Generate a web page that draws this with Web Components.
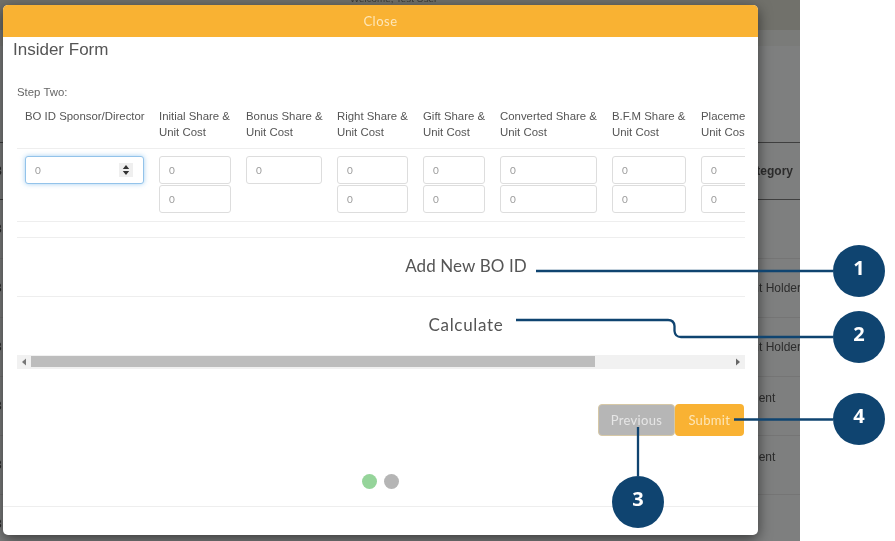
<!DOCTYPE html>
<html>
<head>
<meta charset="utf-8">
<title>Insider Form</title>
<style>
  html, body { margin: 0; padding: 0; width: 895px; height: 541px; overflow: hidden; background: #fff; }
  body { filter: blur(.35px); }
</style>
</head>
<body>
<page-backdrop>
  <insider-modal>
    <share-table></share-table>
  </insider-modal>
</page-backdrop>
<call-outs></call-outs>

<script>
const backdropContent = `
  <style>
    :host { display: block; position: relative; width: 800px; height: 541px; overflow: hidden; background: #7e7f7f; font: 12px 'Liberation Sans', Arial, sans-serif; color: #2c2c2c; }
    .top { height: 30px; background: #71716b; overflow: hidden; }
    .welcome { display: block; margin: -8px 0 0 350px; font-size: 9.800px; line-height: 14px; white-space: nowrap; color: #3a3a36; }
    .band { height: 16px; background: #7a7b79; }
    .gap { height: 96px; }
    .row { box-sizing: border-box; height: 59px; display: flex; align-items: center; justify-content: space-between; border-bottom: 1px solid #757575; }
    .row.head { height: 58px; border-top: 1px solid #3f3f3f; border-bottom: 1px solid #3f3f3f; font-weight: bold; }
    .left { width: 3px; overflow: hidden; text-indent: -5px; }
    .right { width: 100px; margin-right: -10px; text-align: center; white-space: nowrap; }
    .head .right { margin-right: -17px; }
    .two { padding-bottom: 16px; box-sizing: border-box; }
  </style>
  <div class="top">
    <span class="welcome">Welcome, Test User</span>
  </div>
  <div class="band"></div>
  <div class="gap"></div>
  <div class="rows"></div>
  <slot></slot>
`

class PageBackdrop extends HTMLElement {
  connectedCallback() {
    const template = document.createElement('template')
    template.innerHTML = backdropContent
    this.attachShadow({ mode: 'open' })
    this.shadowRoot.append(template.content.cloneNode(true))

    const rows = [
      ['8', 'Category', 'head'],
      ['8', '', ''],
      ['8', 'Account Holder', ''],
      ['8', 'Account Holder', ''],
      ['8', 'Client', 'two'],
      ['8', 'Client', 'two'],
      ['8', '', '']
    ]
    this.shadowRoot.querySelector('.rows').innerHTML = rows.map(([l, r, kind]) => `
      <div class="row ${kind === 'head' ? 'head' : ''}">
        <span class="left">${l}</span>
        <span class="right ${kind === 'two' ? 'two' : ''}">${r}</span>
      </div>`).join('')
  }
}

const modalContent = `
  <style>
    :host { display: flex; flex-direction: column; position: absolute; left: 3px; top: 5px; width: 755px; height: 530px; background: #fff; border-radius: 5px; box-shadow: 0 4px 14px rgba(0,0,0,.55); font-family: 'Liberation Sans', Arial, sans-serif; color: #555; }
    .close { height: 32px; flex: none; display: flex; align-items: center; justify-content: center; background: #f9b233; border-radius: 5px 5px 0 0; color: #fde6b8; font: 13px Lato, sans-serif; letter-spacing: .5px; }
    .title { height: 27px; padding-left: 10px; font-size: 17px; line-height: 26px; }
    .step { margin: 20px 0 8px 14px; font-size: 11.400px; line-height: 16px; color: #666; }
    .scroller { margin: 0 13px 0 14px; }
    .actions { display: flex; justify-content: flex-end; margin: 35px 14.500px 0 0; }
    .btn { box-sizing: border-box; height: 32px; display: flex; align-items: center; justify-content: center; font: 13px Lato, sans-serif; letter-spacing: .3px; border-radius: 4px; }
    .prev { width: 77px; background: #b6b6b6; border: 1px solid #d6c8a6; color: #e6e6e6; }
    .submit { width: 68.500px; background: #f9b233; color: #fde6b8; }
    .dots { display: flex; justify-content: center; gap: 7px; margin-top: 38px; }
    .dots i { display: block; width: 15px; height: 15px; border-radius: 50%; background: #b5b5b5; }
    .dots i.on { background: #95d49a; }
    .foot { margin-top: 17px; border-top: 1px solid #eee; }
  </style>
  <div class="close">Close</div>
  <div class="title">Insider Form</div>
  <div class="step">Step Two:</div>
  <div class="scroller"><slot></slot></div>
  <div class="actions">
    <div class="btn prev">Previous</div>
    <div class="btn submit">Submit</div>
  </div>
  <div class="dots"><i class="on"></i><i></i></div>
  <div class="foot"></div>
`

class InsiderModal extends HTMLElement {
  connectedCallback() {
    const template = document.createElement('template')
    template.innerHTML = modalContent
    this.attachShadow({ mode: 'open' })
    this.shadowRoot.append(template.content.cloneNode(true))
  }
}

const fieldContent = `
  <style>
    :host { display: flex; align-items: center; justify-content: space-between; box-sizing: border-box; height: 28px; padding: 0 10px 0 9px; background: #fff; border: 1px solid #ddd; border-radius: 3px; font: 10px Lato, sans-serif; color: #9a9a9a; }
    :host([focused]) { border-color: #93c3ea; box-shadow: 0 0 5px rgba(102,175,233,.6); }
    svg { display: none; background: #efefef; }
    :host([focused]) svg { display: block; }
  </style>
  <span><slot></slot></span>
  <svg width="14" height="14" viewBox="0 0 14 14"><path d="M7 2 3.800 6h6.400zM7 12 3.800 8h6.400z" fill="#333"/></svg>
`

class NumField extends HTMLElement {
  connectedCallback() {
    this.attachShadow({ mode: 'open' }).innerHTML = fieldContent
  }
}

const tableContent = `
  <style>
    :host { display: block; width: 728px; overflow: hidden; font: 11.400px/16px 'Liberation Sans', Arial, sans-serif; color: #555; }
    .inner { width: 903px; }
    .cols { display: grid; grid-template-columns: 119px 72px 76px 71px 62px 97px 74px 80px; column-gap: 15px; padding: 0 8px; }
    .labels { height: 40px; }
    .labels div { white-space: nowrap; }
    .fields { border-top: 1px solid #eee; padding-top: 7px; height: 65px; box-sizing: content-box; }
    .stack { display: flex; flex-direction: column; gap: 1px; }
    hr { border: 0; border-top: 1px solid #eee; margin: 0; }
    .link { box-sizing: border-box; height: 58px; padding: 0 5px 3px 0; display: flex; align-items: center; justify-content: center; font: 17px Lato, sans-serif; color: #555; letter-spacing: .1px; }
    .link.calc { letter-spacing: .7px; }
    .first { margin-top: 15px; }
  </style>
  <div class="inner">
    <div class="cols labels"></div>
    <div class="cols fields"></div>
    <hr>
    <hr class="first">
    <div class="link">Add New BO ID</div>
    <hr>
    <div class="link calc">Calculate</div>
  </div>
  <h-scrollbar></h-scrollbar>
`

class ShareTable extends HTMLElement {
  connectedCallback() {
    const template = document.createElement('template')
    template.innerHTML = tableContent
    this.attachShadow({ mode: 'open' })
    this.shadowRoot.append(template.content.cloneNode(true))

    const cols = [
      ['BO ID Sponsor/Director', 1],
      ['Initial Share &<br>Unit Cost', 2],
      ['Bonus Share &<br>Unit Cost', 1],
      ['Right Share &<br>Unit Cost', 2],
      ['Gift Share &<br>Unit Cost', 2],
      ['Converted Share &<br>Unit Cost', 2],
      ['B.F.M Share &<br>Unit Cost', 2],
      ['Placement Share &<br>Unit Cost', 2]
    ]
    this.shadowRoot.querySelector('.labels').innerHTML = cols.map(c => `<div>${c[0]}</div>`).join('')
    this.shadowRoot.querySelector('.fields').innerHTML = cols.map((c, i) => `
      <div class="stack">
        ${`<num-field ${i === 0 ? 'focused' : ''}>0</num-field>`.repeat(c[1])}
      </div>`).join('')
  }
}

const scrollbarContent = `
  <style>
    :host { display: flex; align-items: stretch; height: 14px; background: #f1f1f1; }
    .btn { width: 14px; flex: none; display: flex; align-items: center; justify-content: center; }
    .track { flex: 1; display: block; padding: 1px 0 2px; }
    .thumb { width: 564px; height: 100%; background: #bdbdbd; }
  </style>
  <div class="btn"><svg width="6" height="8" viewBox="0 0 6 8"><path d="M5 0.500 1 4l4 3.500z" fill="#777"/></svg></div>
  <div class="track"><div class="thumb"></div></div>
  <div class="btn"><svg width="6" height="8" viewBox="0 0 6 8"><path d="M1 0.500 5 4 1 7.500z" fill="#666"/></svg></div>
`

class HScrollbar extends HTMLElement {
  connectedCallback() {
    this.attachShadow({ mode: 'open' }).innerHTML = scrollbarContent
  }
}

const calloutContent = `
  <style>
    :host { display: block; position: absolute; left: 0; top: 0; width: 895px; height: 541px; pointer-events: none; }
    svg { position: absolute; left: 0; top: 0; }
    .badge { position: absolute; width: 52px; height: 52px; border-radius: 50%; background: #0f4470; color: #fff; font: bold 20px/46px 'Open Sans', sans-serif; text-align: center; }
  </style>
  <svg width="895" height="541" fill="none" stroke="#0f4470" stroke-width="2.300">
    <path d="M536 271H833"/>
    <path d="M516 320H668Q674 320 674.500 326V331Q675 337 681 337H833"/>
    <path d="M638 427V476"/>
    <path d="M734 419.500H833"/>
  </svg>
  <div class="badge" style="left:833px;top:245px">1</div>
  <div class="badge" style="left:833px;top:310.500px">2</div>
  <div class="badge" style="left:612px;top:476px">3</div>
  <div class="badge" style="left:833px;top:393px">4</div>
`

class CallOuts extends HTMLElement {
  connectedCallback() {
    this.attachShadow({ mode: 'open' }).innerHTML = calloutContent
  }
}

window.customElements.define('num-field', NumField)
window.customElements.define('h-scrollbar', HScrollbar)
window.customElements.define('share-table', ShareTable)
window.customElements.define('insider-modal', InsiderModal)
window.customElements.define('page-backdrop', PageBackdrop)
window.customElements.define('call-outs', CallOuts)
</script>
</body>
</html>
